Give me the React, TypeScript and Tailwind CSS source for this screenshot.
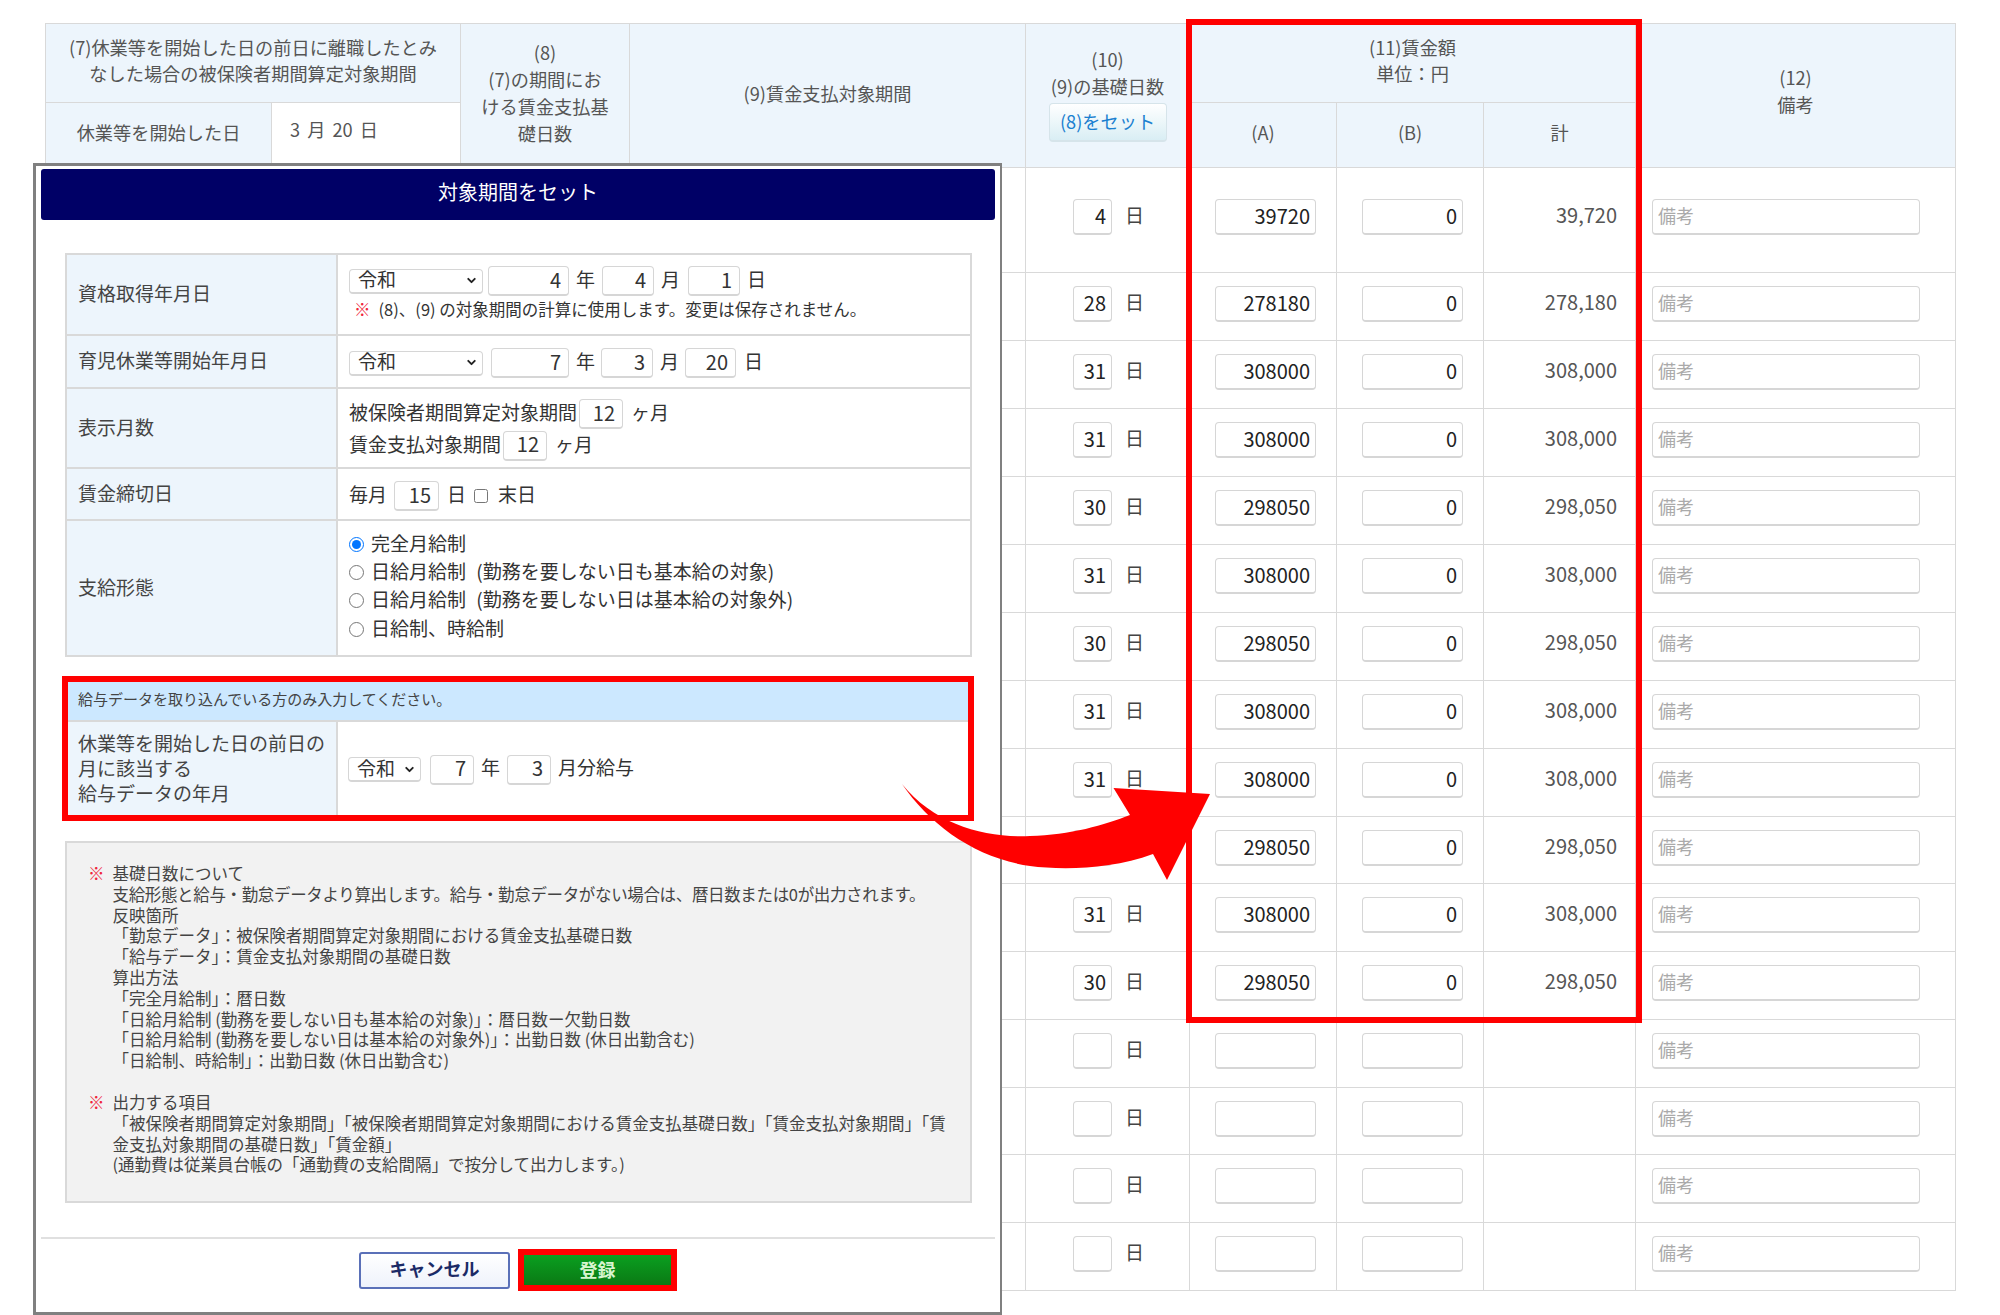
import { ChevronDown } from "lucide-react";

const rows = [
  ["4", "39720", "0", "39,720"],
  ["28", "278180", "0", "278,180"],
  ["31", "308000", "0", "308,000"],
  ["31", "308000", "0", "308,000"],
  ["30", "298050", "0", "298,050"],
  ["31", "308000", "0", "308,000"],
  ["30", "298050", "0", "298,050"],
  ["31", "308000", "0", "308,000"],
  ["31", "308000", "0", "308,000"],
  ["30", "298050", "0", "298,050"],
  ["31", "308000", "0", "308,000"],
  ["30", "298050", "0", "298,050"],
  ["", "", "", ""],
  ["", "", "", ""],
  ["", "", "", ""],
  ["", "", "", ""],
];

const inputBase =
  "block h-[36px] rounded-[4px] border border-b-2 border-[#d6d6d6] bg-white pb-[3px] pr-[5px] text-right text-[20px] text-[#222] outline-none";
const smallInput =
  "block h-[30px] rounded-[4px] border border-b-2 border-[#d6d6d6] bg-white pb-[2px] pr-[7px] text-right text-[20px] text-[#333] outline-none";
const selectCls =
  "flex h-[25px] items-center justify-between rounded-[4px] border border-b-2 border-[#d6d6d6] bg-white pl-[8px] pr-[4px] text-[19px] leading-none text-[#333]";
const th = "border border-[#d9d9d9] bg-[#edf5fc] pb-[6px] text-center font-normal text-[18.2px] leading-[26px] text-[#555]";
const td = "border border-[#d9d9d9] align-top";
const label = "border-2 border-[#d9d9d9] bg-[#edf5fc] pb-[4px] pl-[11px] text-left text-[19px] font-normal leading-[25px] text-[#444]";
const cell = "border-2 border-[#d9d9d9] bg-white align-top pl-[11px] text-[19px] text-[#333] [&_span]:pb-[4px]";

function Era({ width }: { width: string }) {
  return (
    <div className={selectCls + " " + width}>
      <span className="pb-[3px]">令和</span>
      <ChevronDown size={13} strokeWidth={3.5} className="text-[#222]" />
    </div>
  );
}

function Sheet() {
  return (
    <table className="table-fixed border-collapse w-[1910px]">
      <colgroup>
        <col className="w-[226px]" />
        <col className="w-[189px]" />
        <col className="w-[169px]" />
        <col className="w-[396px]" />
        <col className="w-[164px]" />
        <col className="w-[147px]" />
        <col className="w-[147px]" />
        <col className="w-[152px]" />
        <col className="w-[320px]" />
      </colgroup>
      <thead>
        <tr className="h-[79px]">
          <th colSpan={2} className={th}>
            (7)休業等を開始した日の前日に離職したとみ
            <br />
            なした場合の被保険者期間算定対象期間
          </th>
          <th rowSpan={2} className={th + " whitespace-nowrap leading-[27px]"}>
            (8)
            <br />
            (7)の期間にお
            <br />
            ける賃金支払基
            <br />
            礎日数
          </th>
          <th rowSpan={2} className={th}>
            (9)賃金支払対象期間
          </th>
          <th rowSpan={2} className={th + " align-top pt-[22px] leading-[27px]"}>
            (10)
            <br />
            (9)の基礎日数
            <button className="mx-auto mt-[3px] block h-[39px] w-[118px] rounded-[4px] border border-b-2 border-[#d6e4ea] bg-linear-to-b from-white to-[#d9eef4] pb-[2px] text-[18.2px] text-[#1a80d0]">
              (8)をセット
            </button>
          </th>
          <th colSpan={3} className={th}>
            (11)賃金額
            <br />
            単位：円
          </th>
          <th rowSpan={2} className={th + " pb-[9px] leading-[27px]"}>
            (12)
            <br />
            備考
          </th>
        </tr>
        <tr className="h-[65px]">
          <th className={th}>休業等を開始した日</th>
          <th className="border border-[#d9d9d9] bg-white pb-[10px] pl-[18px] text-left text-[18.2px] font-normal text-[#555] [word-spacing:3px]">
            3 月 20 日
          </th>
          <th className={th}>(A)</th>
          <th className={th}>(B)</th>
          <th className={th}>計</th>
        </tr>
      </thead>
      <tbody>
        {rows.map((r, i) => (
          <tr
            key={i}
            className={i === 0 ? "h-[105px]" : i === 9 || i === 13 ? "h-[67px]" : "h-[68px]"}
          >
            <td colSpan={4} className="border border-[#d9d9d9]"></td>
            <td className={td + (i === 0 ? " pt-[31px]" : " pt-[13px]")}>
              <div className="flex items-center gap-[13px] pl-[47px] text-[19px] text-[#444]">
                <input readOnly value={r[0]} className={inputBase + " w-[39px]"} />
                <span className="mt-[-4px]">日</span>
              </div>
            </td>
            <td className={td + (i === 0 ? " pt-[31px]" : " pt-[13px]")}>
              <input readOnly value={r[1]} className={inputBase + " ml-[25px] w-[101px]"} />
            </td>
            <td className={td + (i === 0 ? " pt-[31px]" : " pt-[13px]")}>
              <input readOnly value={r[2]} className={inputBase + " ml-[25px] w-[101px]"} />
            </td>
            <td className={td + " pr-[18px] text-right text-[20px] leading-[32px] text-[#555]" + (i === 0 ? " pt-[31px]" : " pt-[13px]")}>
              {r[3]}
            </td>
            <td className={td + (i === 0 ? " pt-[31px]" : " pt-[13px]")}>
              <input
                readOnly
                placeholder="備考"
                className="ml-[16px] block h-[36px] w-[268px] rounded-[4px] border border-b-2 border-[#d6d6d6] bg-white pb-[3px] pl-[5px] text-[18px] outline-none placeholder:text-[#aaa]"
              />
            </td>
          </tr>
        ))}
      </tbody>
    </table>
  );
}

function Radio({ on, text }: { on?: boolean; text: string }) {
  return (
    <label className="flex h-[28.4px] items-center gap-[7px] leading-none">
      <input type="radio" readOnly checked={!!on} className="m-0 h-[15px] w-[15px] accent-[#0075ff]" />
      <span className="[word-spacing:6px]">{text}</span>
    </label>
  );
}

function Mark() {
  return <span className="font-bold text-[#f0263a]">※</span>;
}

function Modal() {
  return (
    <div className="absolute left-[33px] top-[163px] z-20 flex h-[1152px] w-[969px] flex-col border-[3px] border-r-2 border-[#808080] bg-white">
      <div className="mx-[5px] mt-[3px] flex h-[51px] items-center justify-center rounded-[3px] bg-[#000066] pb-[6px] text-[20px] text-white">
        対象期間をセット
      </div>

      <table className="ml-[29px] mt-[33px] w-[907px] table-fixed border-collapse">
        <colgroup>
          <col className="w-[271px]" />
          <col />
        </colgroup>
        <tbody>
          <tr className="h-[81px]">
            <th className={label}>資格取得年月日</th>
            <td className={cell + " pt-[10px]"}>
              <div className="flex items-center">
                <Era width="w-[134px]" />
                <input readOnly value="4" className={smallInput + " ml-[5px] w-[81px]"} />
                <span className="ml-[7px]">年</span>
                <input readOnly value="4" className={smallInput + " ml-[7px] w-[52px]"} />
                <span className="ml-[7px]">月</span>
                <input readOnly value="1" className={smallInput + " ml-[8px] w-[52px]"} />
                <span className="ml-[7px]">日</span>
              </div>
              <div className="mt-[-1px] flex items-center gap-[8px] pl-[5px] text-[16.5px] leading-[24px]">
                <Mark />
                <span>(8)、(9) の対象期間の計算に使用します。変更は保存されません。</span>
              </div>
            </td>
          </tr>
          <tr className="h-[53px]">
            <th className={label}>育児休業等開始年月日</th>
            <td className={cell + " pt-[11px]"}>
              <div className="flex items-center">
                <Era width="w-[134px]" />
                <input readOnly value="7" className={smallInput + " ml-[8px] w-[78px]"} />
                <span className="ml-[7px]">年</span>
                <input readOnly value="3" className={smallInput + " ml-[6px] w-[52px]"} />
                <span className="ml-[7px]">月</span>
                <input readOnly value="20" className={smallInput + " ml-[6px] w-[51px]"} />
                <span className="ml-[8px]">日</span>
              </div>
            </td>
          </tr>
          <tr className="h-[80px]">
            <th className={label}>表示月数</th>
            <td className={cell + " pt-[9px]"}>
              <div className="flex items-center">
                <span>被保険者期間算定対象期間</span>
                <input readOnly value="12" className={smallInput + " ml-[2px] w-[44px]"} />
                <span className="ml-[8px]">ヶ月</span>
              </div>
              <div className="mt-[-1px] flex items-center">
                <span>賃金支払対象期間</span>
                <input readOnly value="12" className={smallInput + " ml-[2px] w-[44px]"} />
                <span className="ml-[8px]">ヶ月</span>
              </div>
            </td>
          </tr>
          <tr className="h-[52px]">
            <th className={label}>賃金締切日</th>
            <td className={cell + " pt-[11px]"}>
              <div className="flex items-center">
                <span>毎月</span>
                <input readOnly value="15" className={smallInput + " ml-[7px] w-[45px]"} />
                <span className="ml-[8px]">日</span>
                <input type="checkbox" readOnly className="m-0 ml-[8px] h-[14px] w-[14px]" />
                <span className="ml-[10px]">末日</span>
              </div>
            </td>
          </tr>
          <tr className="h-[136px]">
            <th className={label}>支給形態</th>
            <td className={cell + " pt-[9px]"}>
              <Radio on text="完全月給制" />
              <Radio text="日給月給制 (勤務を要しない日も基本給の対象)" />
              <Radio text="日給月給制 (勤務を要しない日は基本給の対象外)" />
              <Radio text="日給制、時給制" />
            </td>
          </tr>
        </tbody>
      </table>

      <div className="ml-[26px] mt-[19px] w-[912px] border-[6px] border-[#ff0000]">
        <div className="flex h-[40px] items-center border-b-2 border-[#d9d9d9] bg-[#cce8ff] pb-[4px] pl-[10px] text-[15px] text-[#444]">
          給与データを取り込んでいる方のみ入力してください。
        </div>
        <div className="flex h-[93px]">
          <div className="flex w-[270px] items-center border-r-2 border-[#d9d9d9] bg-[#edf5fc] pb-[3px] pl-[10px] text-[19px] leading-[25px] text-[#444]">
            <div>
              休業等を開始した日の前日の
              <br />
              月に該当する
              <br />
              給与データの年月
            </div>
          </div>
          <div className="flex flex-1 items-center pl-[10px] pt-[2px] text-[19px] text-[#333] [&_span]:pb-[4px]">
            <Era width="w-[73px]" />
            <input readOnly value="7" className={smallInput + " ml-[9px] w-[44px]"} />
            <span className="ml-[7px]">年</span>
            <input readOnly value="3" className={smallInput + " ml-[7px] w-[44px]"} />
            <span className="ml-[7px]">月分給与</span>
          </div>
        </div>
      </div>

      <div className="ml-[29px] mt-[20px] h-[362px] w-[907px] border-2 border-[#d9d9d9] bg-[#f2f2f2] pl-[21px] pt-[20px] text-[16.5px] leading-[20.8px] text-[#444]">
        <div className="flex gap-[8px]">
          <Mark />
          <div className="whitespace-nowrap">
            基礎日数について
            <br />
            <span className="tracking-[-0.35px]">
              支給形態と給与・勤怠データより算出します。給与・勤怠データがない場合は、暦日数または0が出力されます。
            </span>
            <br />
            反映箇所
            <br />
            「勤怠データ」：被保険者期間算定対象期間における賃金支払基礎日数
            <br />
            「給与データ」：賃金支払対象期間の基礎日数
            <br />
            算出方法
            <br />
            「完全月給制」：暦日数
            <br />
            「日給月給制 (勤務を要しない日も基本給の対象)」：暦日数ー欠勤日数
            <br />
            「日給月給制 (勤務を要しない日は基本給の対象外)」：出勤日数 (休日出勤含む)
            <br />
            「日給制、時給制」：出勤日数 (休日出勤含む)
          </div>
        </div>
        <div className="mt-[21px] flex gap-[8px]">
          <Mark />
          <div className="whitespace-nowrap">
            出力する項目
            <br />
            「被保険者期間算定対象期間」「被保険者期間算定対象期間における賃金支払基礎日数」「賃金支払対象期間」「賃
            <br />
            金支払対象期間の基礎日数」「賃金額」
            <br />
            (通勤費は従業員台帳の「通勤費の支給間隔」で按分して出力します。)
          </div>
        </div>
      </div>

      <div className="mx-[5px] mt-[34px] border-t-2 border-[#e0e0e0]"></div>

      <div className="mt-[10px] flex items-center justify-center gap-[8px]">
        <button className="h-[37px] w-[151px] rounded-[3px] border-2 border-[#5a70b8] bg-linear-to-b from-white to-[#eef2fb] pb-[3px] text-[18px] font-bold text-[#1b2a66]">
          キャンセル
        </button>
        <div className="border-[6px] border-[#ff0000]">
          <button className="block h-[30px] w-[147px] bg-linear-to-b from-[#0a9f20] to-[#0a7a14] pb-[2px] text-[18px] font-bold text-[#d8f5d0]">
            登録
          </button>
        </div>
      </div>
    </div>
  );
}

export default function App() {
  return (
    <div className="relative h-[1315px] w-[2000px] overflow-hidden bg-white pl-[45px] pt-[23px] font-['Noto_Sans_CJK_JP','Noto_Sans',sans-serif]">
      <Sheet />
      <Modal />

      {/* wage column highlight */}
      <div className="pointer-events-none absolute left-[1186px] top-[19px] z-10 h-[1004px] w-[456px] border-[6px] border-[#ff0000]"></div>

      {/* arrow */}
      <svg className="pointer-events-none absolute left-0 top-0 z-30" width="2000" height="1315" viewBox="0 0 2000 1315">
        <path
          d="M902 784 C935 825 985 838 1030 836 C1070 835 1105 825 1130 815 L1113.5 788 L1210 794 L1167 880 L1153 854 C1110 870 1060 870 1030 866 C975 858 930 825 902 784 Z"
          fill="#ff0000"
        />
      </svg>
    </div>
  );
}
